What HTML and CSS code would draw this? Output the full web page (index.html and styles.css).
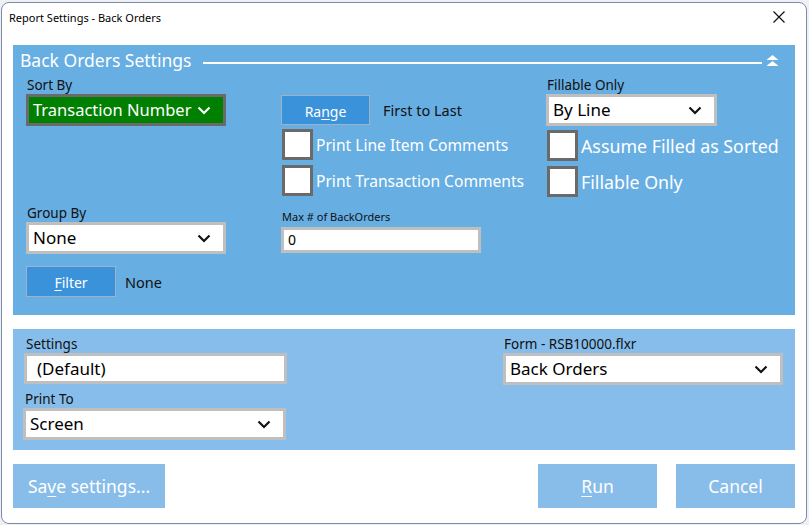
FILE: index.html
```html
<!DOCTYPE html>
<html>
<head>
<meta charset="utf-8">
<link rel="stylesheet" href="styles.css">
</head>
<body>
<div class="window">
  <div class="titlebar">
    <span class="title">Report Settings - Back Orders</span>
    <svg class="close" width="12" height="12" viewBox="0 0 12 12"><path d="M0.5 0.5 L11.5 11.5 M11.5 0.5 L0.5 11.5" stroke="#111" stroke-width="1.2" fill="none"/></svg>
  </div>
  <div class="content">
    <section class="panel main">
      <div class="panel-head">
        <span class="panel-title">Back Orders Settings</span>
        <span class="rule"></span>
        <svg class="collapse" width="13" height="12" viewBox="0 0 13 12"><polygon points="6.5,0 12.5,5 0.5,5" fill="#fff"/><polygon points="6.5,6 12.5,11 0.5,11" fill="#fff"/></svg>
      </div>
      <div class="cols">
        <div class="col col1">
          <div class="label">Sort By</div>
          <div class="select green w200"><span>Transaction Number</span><svg class="chev" width="14" height="9" viewBox="0 0 14 9"><path d="M1.5 1.5 L7 7 L12.5 1.5" stroke="#fff" stroke-width="2.2" fill="none"/></svg></div>
          <div class="label group">Group By</div>
          <div class="select w200"><span>None</span><svg class="chev" width="14" height="9" viewBox="0 0 14 9"><path d="M1.5 1.5 L7 7 L12.5 1.5" stroke="#111" stroke-width="2.2" fill="none"/></svg></div>
          <div class="btnrow filterrow">
            <div class="bluebtn filter"><u>F</u>ilter</div>
            <span class="plain">None</span>
          </div>
        </div>
        <div class="col col2">
          <div class="btnrow rangerow">
            <div class="bluebtn range">Ra<u>n</u>ge</div>
            <span class="plain">First to Last</span>
          </div>
          <div class="check first"><span class="box"></span><span class="ctext small">Print Line Item Comments</span></div>
          <div class="check"><span class="box"></span><span class="ctext small">Print Transaction Comments</span></div>
          <div class="label tiny">Max # of BackOrders</div>
          <div class="input maxin"><span>0</span></div>
        </div>
        <div class="col col3">
          <div class="label">Fillable Only</div>
          <div class="select w171"><span>By Line</span><svg class="chev" width="14" height="9" viewBox="0 0 14 9"><path d="M1.5 1.5 L7 7 L12.5 1.5" stroke="#111" stroke-width="2.2" fill="none"/></svg></div>
          <div class="check first"><span class="box"></span><span class="ctext">Assume Filled as Sorted</span></div>
          <div class="check"><span class="box"></span><span class="ctext">Fillable Only</span></div>
        </div>
      </div>
    </section>
    <section class="panel second">
      <div class="col left2">
        <div class="label">Settings</div>
        <div class="input setin"><span>(Default)</span></div>
        <div class="label printto">Print To</div>
        <div class="select w263"><span>Screen</span><svg class="chev" width="14" height="9" viewBox="0 0 14 9"><path d="M1.5 1.5 L7 7 L12.5 1.5" stroke="#111" stroke-width="2.2" fill="none"/></svg></div>
      </div>
      <div class="col right2">
        <div class="label">Form - RSB10000.flxr</div>
        <div class="select w280"><span>Back Orders</span><svg class="chev" width="14" height="9" viewBox="0 0 14 9"><path d="M1.5 1.5 L7 7 L12.5 1.5" stroke="#111" stroke-width="2.2" fill="none"/></svg></div>
      </div>
    </section>
    <div class="actions">
      <div class="actbtn save">Sa<u>v</u>e settings...</div>
      <div class="spacer"></div>
      <div class="actbtn run"><u>R</u>un</div>
      <div class="actbtn cancel">Cancel</div>
    </div>
  </div>
</div>
</body>
</html>
```
FILE: styles.css
```css
* { box-sizing: border-box; }
html, body { margin: 0; padding: 0; }
body {
  width: 809px;
  height: 525px;
  background: #eef0f3;
  font-family: "Noto Sans", "Open Sans", sans-serif;
  overflow: hidden;
}
.window {
  margin: 2px 0 0 1px;
  width: 806px;
  height: 522px;
  background: #fff;
  border: 1px solid #7d8bab;
  border-radius: 8px;
}
.titlebar {
  height: 30px;
  display: flex;
  align-items: center;
  padding: 0 21px 0 7px;
}
.title {
  font-size: 11px;
  color: #000;
  flex: 1;
  margin-top: -1px;
}
.close { display: block; margin-top: -3px; }
.content {
  padding: 12px 11px 0 11px;
}
.panel {
  width: 782px;
}
.main {
  background: #67aee3;
  height: 270px;
}
.panel-head {
  height: 31px;
  display: flex;
  align-items: center;
  padding: 0 16px 0 7px;
}
.panel-title {
  color: #fff;
  font-size: 17.5px;
  margin-top: -2px;
}
.rule {
  flex: 1;
  height: 2px;
  background: #fff;
  margin: 4px 4px 0 12px;
}
.collapse { display: block; margin-top: 1px; }
.cols {
  display: flex;
  padding-left: 13px;
}
.col { display: flex; flex-direction: column; align-items: flex-start; }
.col1 { width: 255px; }
.col2 { width: 265px; }
.col3 { flex: 1; }
.label {
  height: 18px;
  line-height: 18px;
  font-size: 13.5px;
  color: #111;
  padding-left: 1px;
}
.label.group { margin-top: 78px; }
.label.tiny {
  font-size: 11px;
  height: 14px;
  line-height: 14px;
  margin-top: 14px;
}
.select, .input {
  height: 32px;
  border: 3px solid #bfbfbf;
  background: #fff;
  display: flex;
  align-items: center;
  padding: 0 12px 0 4px;
  font-size: 17px;
  color: #000;
}
.select span, .input span { flex: 1; white-space: nowrap; margin-top: -1px; }
.select.green {
  background: #008000;
  border-color: #6a6a6a;
  color: #fff;
  font-size: 16.5px;
}
.w200 { width: 200px; }
.w171 { width: 171px; }
.w263 { width: 263px; }
.w280 { width: 280px; }
.chev { display: block; }
.btnrow { display: flex; align-items: center; }
.bluebtn {
  background: #3a92db;
  border: 1px solid #9fb3c8;
  color: #fff;
  font-size: 14px;
  display: flex;
  align-items: center;
  justify-content: center;
}
.bluebtn u { text-decoration-thickness: 1px; text-underline-offset: 2px; }
.plain { font-size: 14.5px; color: #111; }
.filterrow { margin-top: 12px; }
.filter { width: 90px; height: 31px; padding-top: 1px; }
.filterrow .plain { margin-left: 9px; }
.rangerow { margin-top: 19px; }
.range { width: 89px; height: 30px; padding-top: 2px; }
.rangerow .plain { margin-left: 13px; }
.check {
  display: flex;
  align-items: center;
  margin-top: 5px;
  height: 31px;
}
.check.first { margin-top: 4px; }
.box {
  width: 31px;
  height: 31px;
  border: 3px solid #6a6a6a;
  background: #fff;
  margin-left: 1px;
}
.ctext {
  color: #fff;
  font-size: 17.8px;
  margin-left: 3px;
  white-space: nowrap;
}
.ctext.small { font-size: 15.6px; }
.input.maxin {
  margin-top: 3px;
  width: 200px;
  height: 26px;
  font-size: 14px;
}
.second {
  margin-top: 14px;
  height: 121px;
  background: #87bdea;
  display: flex;
  padding: 6px 0 0 11px;
}
.left2 { width: 479px; flex-shrink: 0; }
.input.setin {
  width: 263px;
  height: 31px;
  padding-left: 10px;
}
.left2 .label { padding-left: 2px; }
.label.printto { margin-top: 6px; padding-left: 1px; }
.left2 .select { margin-left: -1px; }
.actions {
  display: flex;
  margin-top: 14px;
  width: 782px;
}
.actbtn {
  height: 44px;
  background: #88bdea;
  color: #fff;
  font-size: 17.5px;
  display: flex;
  align-items: center;
  justify-content: center;
}
.actbtn u { text-decoration-thickness: 1px; text-underline-offset: 3px; }
.save { width: 152px; }
.spacer { flex: 1; }
.run { width: 119px; }
.cancel { width: 119px; margin-left: 19px; }
```
